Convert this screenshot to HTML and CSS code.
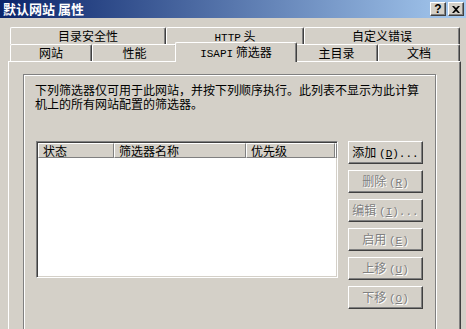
FILE: index.html
```html
<!DOCTYPE html>
<html lang="zh-CN">
<head>
<meta charset="utf-8">
<title>默认网站 属性</title>
<link rel="stylesheet" href="styles.css">
</head>
<body>
<div class="window">
  <div class="titlebar">
    <span class="title">默认网站 属性</span>
    <div class="tb-btns">
      <span class="tb-btn help">?</span>
      <span class="tb-btn close"><svg width="8" height="7" viewBox="0 0 8 7"><path d="M0 0h2l2 2 2-2h2L5 3.5 8 7H6L4 5 2 7H0l3-3.5z" fill="#000"/></svg></span>
    </div>
  </div>
  <div class="client">
    <div class="tabs">
      <div class="tabrow">
        <div class="tab t-dir">目录安全性</div>
        <div class="tab t-http"><span class="lat">HTTP</span> 头</div>
        <div class="tab t-err">自定义错误</div>
      </div>
      <div class="tabrow">
        <div class="tab t-site">网站</div>
        <div class="tab t-perf">性能</div>
        <div class="tab t-isapi sel"><span class="lat">ISAPI</span> 筛选器</div>
        <div class="tab t-home">主目录</div>
        <div class="tab t-doc">文档</div>
      </div>
    </div>
    <div class="panel">
      <div class="group">
        <p class="desc">下列筛选器仅可用于此网站，并按下列顺序执行。此列表不显示为此计算<br>机上的所有网站配置的筛选器。</p>
        <div class="filters">
          <div class="listview">
            <div class="lv-header">
              <div class="col c-state">状态</div>
              <div class="col c-name">筛选器名称</div>
              <div class="col c-prio">优先级</div>
              <div class="col c-fill"></div>
            </div>
          </div>
          <div class="actions">
            <button class="btn">添加 <span class="lat">(<u>D</u>)...</span></button>
            <button class="btn off">删除 <span class="lat">(<u>R</u>)</span></button>
            <button class="btn off">编辑 <span class="lat">(<u>I</u>)...</span></button>
            <button class="btn off">启用 <span class="lat">(<u>E</u>)</span></button>
            <button class="btn off">上移 <span class="lat">(<u>U</u>)</span></button>
            <button class="btn off">下移 <span class="lat">(<u>O</u>)</span></button>
          </div>
        </div>
      </div>
    </div>
  </div>
</div>
</body>
</html>
```
FILE: styles.css
```css
html, body {
  margin: 0;
  padding: 0;
}
body {
  width: 466px;
  height: 329px;
  overflow: hidden;
  background: #d4d0c8;
  font: 12px "Noto Sans CJK SC", "Noto Sans", sans-serif;
  color: #000;
}
.lat {
  font-family: "Liberation Mono", monospace;
  font-size: 11px;
}
.titlebar {
  height: 18px;
  display: flex;
  align-items: center;
  padding: 0 2px 0 3px;
  background: linear-gradient(to right, #0a246a, #a6caf0);
}
.title {
  flex: 1;
  color: #fff;
  font-weight: bold;
  font-size: 13px;
  line-height: 18px;
}
.tb-btns {
  display: flex;
  gap: 2px;
}
.tb-btn {
  box-sizing: border-box;
  width: 16px;
  height: 14px;
  display: flex;
  align-items: center;
  justify-content: center;
  background: #d4d0c8;
  border: 1px solid;
  border-color: #fff #404040 #404040 #fff;
  box-shadow: inset -1px -1px #808080;
}
.help {
  font: bold 12px "Liberation Sans", sans-serif;
  line-height: 12px;
}
.client {
  padding: 9px 0 0 8px;
}
.tabs {
  margin-left: 2px;
  width: 450px;
}
.tabrow {
  display: flex;
  height: 17px;
}
.tab {
  box-sizing: border-box;
  height: 17px;
  flex: none;
  background: #d4d0c8;
  border-left: 1px solid #fff;
  border-top: 1px solid #fff;
  border-right: 1px solid #404040;
  box-shadow: inset -1px 0 #808080;
  border-radius: 2px 2px 0 0;
  text-align: center;
  line-height: 16px;
  white-space: nowrap;
}
.t-dir { width: 156px; }
.t-http { width: 138px; }
.t-err { width: 156px; }
.t-site { width: 82px; }
.t-perf { width: 85px; }
.t-isapi { width: 118px; }
.t-home { width: 83px; }
.t-doc { width: 82px; }
.tab.sel {
  width: 122px;
  height: 20px;
  margin: -2px -2px 0;
  line-height: 18px;
  position: relative;
  z-index: 2;
}
.panel {
  box-sizing: border-box;
  width: 453px;
  height: 300px;
  border-top: 1px solid #fff;
  border-left: 1px solid #fff;
  border-right: 1px solid #404040;
  box-shadow: inset -1px 0 #808080;
  padding: 12px 0 0 14px;
}
.group {
  box-sizing: border-box;
  width: 413px;
  height: 300px;
  border: 1px solid #808080;
  box-shadow: inset 1px 1px #fff, 1px 1px #fff;
  padding: 8px 0 0 11px;
}
.desc {
  margin: 0;
  line-height: 14px;
  white-space: nowrap;
}
.filters {
  display: flex;
  gap: 10px;
  margin: 30px 0 0 1px;
}
.listview {
  box-sizing: border-box;
  width: 302px;
  height: 137px;
  padding: 1px;
  background: #fff;
  border: 1px solid;
  border-color: #808080 #fff #fff #808080;
  box-shadow: inset 1px 1px #404040, inset -1px -1px #d4d0c8;
}
.lv-header {
  display: flex;
  height: 15px;
}
.col {
  box-sizing: border-box;
  height: 15px;
  flex: none;
  background: #d4d0c8;
  border: 1px solid;
  border-color: #fff #808080 #808080 #fff;
  padding-left: 4px;
  line-height: 13px;
  white-space: nowrap;
}
.c-state { width: 76px; }
.c-name { width: 132px; }
.c-prio { width: 89px; }
.c-fill { flex: 1; padding: 0; }
.actions {
  display: flex;
  flex-direction: column;
  gap: 6px;
}
.btn {
  box-sizing: border-box;
  width: 75px;
  height: 23px;
  padding: 0;
  background: #d4d0c8;
  border: 1px solid;
  border-color: #fff #404040 #404040 #fff;
  box-shadow: inset -1px -1px #808080;
  font: 12px "Noto Sans CJK SC", "Noto Sans", sans-serif;
  color: #000;
  line-height: 20px;
  white-space: nowrap;
}
.btn .lat {
  font-size: 11px;
}
.btn.off {
  color: #808080;
  text-shadow: 1px 1px 0 #fff;
}
```
